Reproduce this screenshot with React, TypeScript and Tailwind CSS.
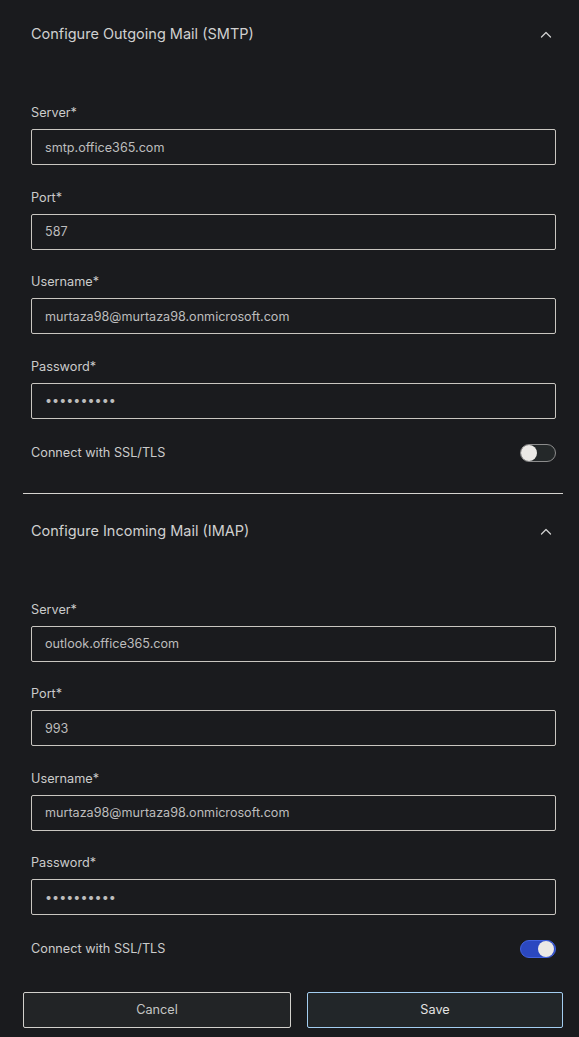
import React from "react";

function ChevronUp() {
  return (
    <svg width="12" height="12" viewBox="0 0 12 12" fill="none" className="text-[#cfcfcf]">
      <path d="M1.5 8L6 3.5L10.5 8" stroke="currentColor" strokeWidth="1.3" strokeLinecap="round" strokeLinejoin="round" />
    </svg>
  );
}

function Field({ label, value, password }: { label: string; value: string; password?: boolean }) {
  return (
    <div className="flex flex-col">
      <label className="text-[12.7px] leading-5 text-[#cbcbcb]">{label}</label>
      <input
        readOnly
        type={password ? "password" : "text"}
        value={value}
        className="mt-[6px] h-9 w-full rounded-[2px] border border-[#c9c6c1] bg-[#1a1b1e] px-[13px] text-[12.6px] text-[#bdbdbd] outline-none"
        style={{ fontFamily: "Inter, 'Noto Sans', sans-serif" }}
      />
    </div>
  );
}

function Toggle({ on }: { on: boolean }) {
  return (
    <div
      className={
        on
          ? "relative h-[18px] w-9 rounded-full border border-[#4263e0] bg-[#2b48c0]"
          : "relative h-[18px] w-9 rounded-full border border-[#8c8c8c] bg-[#242829]"
      }
    >
      <div
        className={
          on
            ? "absolute right-[1px] top-[0px] h-4 w-4 rounded-full bg-[#ebe9e6]"
            : "absolute left-[0px] top-[0px] h-4 w-4 rounded-full bg-[#ebe9e6]"
        }
      />
    </div>
  );
}

function Section({
  title,
  server,
  port,
  on,
  divider,
}: {
  title: string;
  server: string;
  port: string;
  on: boolean;
  divider: boolean;
}) {
  return (
    <div className={divider ? "border-b border-[#d6d4d0] pl-2 pr-[7px] pb-[31px]" : "pl-2 pr-[7px]"}>
      <div className="flex items-center justify-between">
        <div className="text-[14.5px] leading-6 text-[#d0d0d0]">{title}</div>
        <div className="mr-[4px] mt-[2px] flex items-center">
          <ChevronUp />
        </div>
      </div>
      <div className="mt-[57px] flex flex-col gap-[22.5px]">
        <Field label="Server*" value={server} />
        <Field label="Port*" value={port} />
        <Field label="Username*" value="murtaza98@murtaza98.onmicrosoft.com" />
        <Field label="Password*" value="1234567890" password />
      </div>
      <div className="mt-[25px] flex h-[18px] items-center justify-between">
        <span className="text-[12.7px] text-[#cbcbcb]">Connect with SSL/TLS</span>
        <Toggle on={on} />
      </div>
    </div>
  );
}

export default function App() {
  return (
    <div
      className="min-h-screen bg-[#1a1b1e] pl-[23px] pr-[16px] pt-[22px]"
      style={{ fontFamily: "Inter, 'Noto Sans', sans-serif" }}
    >
      <Section title="Configure Outgoing Mail (SMTP)" server="smtp.office365.com" port="587" on={false} divider />
      <div className="pt-[25px]">
        <Section title="Configure Incoming Mail (IMAP)" server="outlook.office365.com" port="993" on divider={false} />
      </div>
      <div className="mt-[34px] flex gap-4">
        <button className="h-9 w-[268px] rounded-[2px] border border-[#d2d0cc] bg-[#222426] text-[12.7px] text-[#c4c4c4]">
          Cancel
        </button>
        <button className="h-9 flex-1 rounded-[2px] border border-[#a3cdf0] bg-[#222629] text-[12.7px] text-[#e2e2e2]">
          Save
        </button>
      </div>
    </div>
  );
}
